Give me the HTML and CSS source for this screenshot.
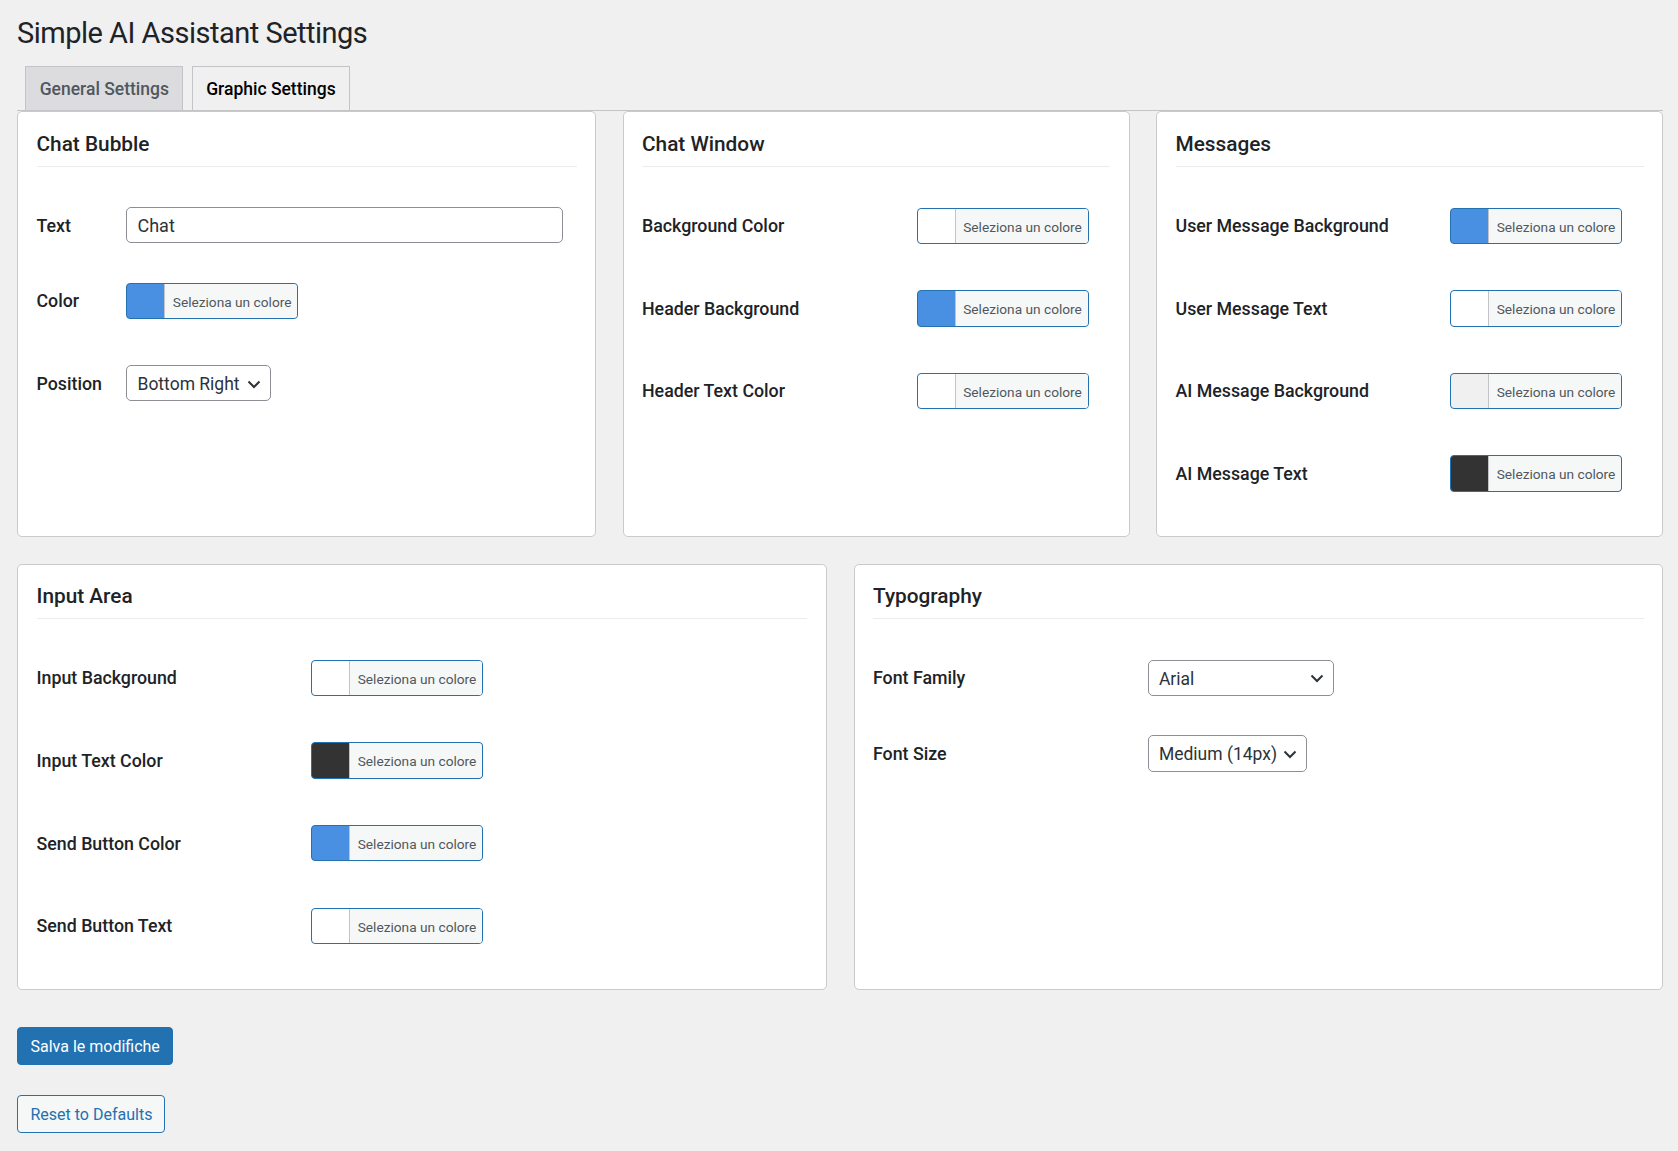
FILE: index.html
```html
<!DOCTYPE html>
<html lang="it">
<head>
<meta charset="utf-8">
<title>Simple AI Assistant Settings</title>
<link rel="stylesheet" href="styles.css">
</head>
<body>
<div class="wrap">
  <h1 class="page-title">Simple AI Assistant Settings</h1>
  <nav class="tabs">
    <a class="tab">General Settings</a>
    <a class="tab tab-active">Graphic Settings</a>
  </nav>

  <div class="grid grid-top">
    <section class="card">
      <h3 class="card-title">Chat Bubble</h3>
      <div class="form form-narrow">
        <div class="row row-plain">
          <div class="label">Text</div>
          <div class="control"><div class="text-input">Chat</div></div>
        </div>
        <div class="row">
          <div class="label">Color</div>
          <div class="control">
            <div class="cp sw-blue"><span class="cp-text">Seleziona un colore</span></div>
          </div>
        </div>
        <div class="row row-plain">
          <div class="label">Position</div>
          <div class="control">
            <div class="select select-pos"><span>Bottom Right</span><svg class="chev" viewBox="0 0 20 20"><polyline points="4.5,7.5 10,13 15.5,7.5"/></svg></div>
          </div>
        </div>
      </div>
    </section>

    <section class="card">
      <h3 class="card-title">Chat Window</h3>
      <div class="form">
        <div class="row">
          <div class="label">Background Color</div>
          <div class="control"><div class="cp sw-white"><span class="cp-text">Seleziona un colore</span></div></div>
        </div>
        <div class="row">
          <div class="label">Header Background</div>
          <div class="control"><div class="cp sw-blue"><span class="cp-text">Seleziona un colore</span></div></div>
        </div>
        <div class="row">
          <div class="label">Header Text Color</div>
          <div class="control"><div class="cp sw-white"><span class="cp-text">Seleziona un colore</span></div></div>
        </div>
      </div>
    </section>

    <section class="card">
      <h3 class="card-title">Messages</h3>
      <div class="form">
        <div class="row">
          <div class="label">User Message Background</div>
          <div class="control"><div class="cp sw-blue"><span class="cp-text">Seleziona un colore</span></div></div>
        </div>
        <div class="row">
          <div class="label">User Message Text</div>
          <div class="control"><div class="cp sw-white"><span class="cp-text">Seleziona un colore</span></div></div>
        </div>
        <div class="row">
          <div class="label">AI Message Background</div>
          <div class="control"><div class="cp sw-light"><span class="cp-text">Seleziona un colore</span></div></div>
        </div>
        <div class="row">
          <div class="label">AI Message Text</div>
          <div class="control"><div class="cp sw-dark"><span class="cp-text">Seleziona un colore</span></div></div>
        </div>
      </div>
    </section>
  </div>

  <div class="grid grid-bottom">
    <section class="card">
      <h3 class="card-title">Input Area</h3>
      <div class="form">
        <div class="row">
          <div class="label">Input Background</div>
          <div class="control"><div class="cp sw-white"><span class="cp-text">Seleziona un colore</span></div></div>
        </div>
        <div class="row">
          <div class="label">Input Text Color</div>
          <div class="control"><div class="cp sw-dark"><span class="cp-text">Seleziona un colore</span></div></div>
        </div>
        <div class="row">
          <div class="label">Send Button Color</div>
          <div class="control"><div class="cp sw-blue"><span class="cp-text">Seleziona un colore</span></div></div>
        </div>
        <div class="row">
          <div class="label">Send Button Text</div>
          <div class="control"><div class="cp sw-white"><span class="cp-text">Seleziona un colore</span></div></div>
        </div>
      </div>
    </section>

    <section class="card">
      <h3 class="card-title">Typography</h3>
      <div class="form">
        <div class="row row-plain">
          <div class="label">Font Family</div>
          <div class="control">
            <div class="select select-family"><span>Arial</span><svg class="chev" viewBox="0 0 20 20"><polyline points="4.5,7.5 10,13 15.5,7.5"/></svg></div>
          </div>
        </div>
        <div class="row row-plain">
          <div class="label">Font Size</div>
          <div class="control">
            <div class="select select-size"><span>Medium (14px)</span><svg class="chev" viewBox="0 0 20 20"><polyline points="4.5,7.5 10,13 15.5,7.5"/></svg></div>
          </div>
        </div>
      </div>
    </section>
  </div>

  <div class="actions">
    <button class="btn btn-primary" type="button">Salva le modifiche</button>
    <button class="btn btn-secondary" type="button">Reset to Defaults</button>
  </div>
</div>
</body>
</html>
```

FILE: styles.css
```css
* { box-sizing: border-box; }

html, body {
  margin: 0;
  padding: 0;
  background: #f0f0f1;
}

body {
  font-family: Roboto, "Noto Sans", "Liberation Sans", sans-serif;
  color: #1d2327;
  width: 1678px;
  height: 1151px;
  overflow: hidden;
}

.wrap {
  padding: 0 15px 0 17px;
}

.page-title {
  margin: 13.6px 0 0;
  font-size: 29px;
  line-height: 39px;
  font-weight: 400;
  letter-spacing: -0.5px;
  color: #1d2327;
}

.tabs {
  display: flex;
  gap: 8.6px;
  margin-top: 13.4px;
  padding-left: 8.4px;
  border-bottom: 1px solid #c3c4c7;
}

.tab {
  display: block;
  height: 44px;
  padding: 2px 13.3px 0;
  line-height: 41px;
  font-size: 17.5px;
  font-weight: 500;
  color: #50575e;
  background: #dcdcde;
  border: 1px solid #c3c4c7;
  border-bottom: none;
  white-space: nowrap;
}

.tab-active {
  color: #000;
  background: #f0f0f1;
}

.grid {
  display: grid;
  column-gap: 26.5px;
}

.grid-top {
  grid-template-columns: 579px 1fr 1fr;
  margin-top: 0.5px;
}

.grid-bottom {
  grid-template-columns: 1fr 1fr;
  column-gap: 27px;
  margin-top: 26.5px;
}

.card {
  background: #fff;
  border: 1px solid #c8cacd;
  border-radius: 5px;
  padding: 18.5px 18.5px 18px;
}

.card-title {
  margin: 0;
  font-size: 20.8px;
  line-height: 27px;
  font-weight: 500;
  padding-bottom: 8px;
  border-bottom: 1px solid #ececec;
  color: #1d2327;
}

.form {
  margin-top: 21px;
}

.row {
  display: flex;
  align-items: flex-start;
  padding: 19.6px 0;
}

.row-plain {
  padding: 19.5px 0;
}

.label {
  flex: 0 0 274.5px;
  padding-top: 6.5px;
  font-size: 17.8px;
  line-height: 23.7px;
  font-weight: 500;
  color: #1d2327;
  white-space: nowrap;
}

.form-narrow .label {
  flex-basis: 89.6px;
}

.control {
  display: flex;
}

.text-input {
  width: 437px;
  height: 36px;
  border: 1px solid #8c8f94;
  border-radius: 5px;
  padding: 2px 10.4px 0;
  font-size: 18px;
  line-height: 32px;
  color: #2c3338;
  background: #fff;
}

/* colour picker button */
.cp {
  display: flex;
  width: 172px;
  height: 36.4px;
  margin-bottom: 7px;
  padding-left: 37px;
  border: 1px solid #2271b1;
  border-radius: 4px;
  overflow: hidden;
}

.cp-text {
  flex: 1;
  background: #f6f7f7;
  border-left: 1px solid #c3c4c7;
  padding: 2px 6px 0 7.7px;
  font-size: 13.7px;
  line-height: 32.4px;
  color: #50575e;
  white-space: nowrap;
}

.sw-blue { background: #4a90e2; }
.sw-white { background: #ffffff; }
.sw-light { background: #f0f0f0; }
.sw-dark { background: #333333; }

/* select */
.select {
  position: relative;
  height: 36.4px;
  border: 1px solid #8c8f94;
  border-radius: 5px;
  padding: 2px 31px 0 10.4px;
  font-size: 17.5px;
  line-height: 32.4px;
  color: #2c3338;
  background: #fff;
  white-space: nowrap;
}

.select-pos { width: 144.5px; }
.select-family { width: 186px; }
.select-size { width: 159.5px; }

.chev {
  position: absolute;
  right: 6px;
  top: 7.5px;
  width: 20px;
  height: 20px;
  fill: none;
  stroke: #2c3338;
  stroke-width: 2;
}

.actions {
  display: flex;
  flex-direction: column;
  align-items: flex-start;
  gap: 30.3px;
  margin-top: 37.5px;
}

.btn {
  font-family: Roboto, "Noto Sans", "Liberation Sans", sans-serif;
  font-size: 16px;
  border-radius: 4px;
  padding: 1px 12.5px 0;
  cursor: pointer;
  white-space: nowrap;
}

.btn-primary {
  height: 38px;
  width: 156px;
  background: #2271b1;
  border: 1px solid #2271b1;
  color: #fff;
}

.btn-secondary {
  height: 37.3px;
  width: 147.7px;
  background: #f6f7f7;
  border: 1px solid #2271b1;
  color: #2271b1;
}
```
